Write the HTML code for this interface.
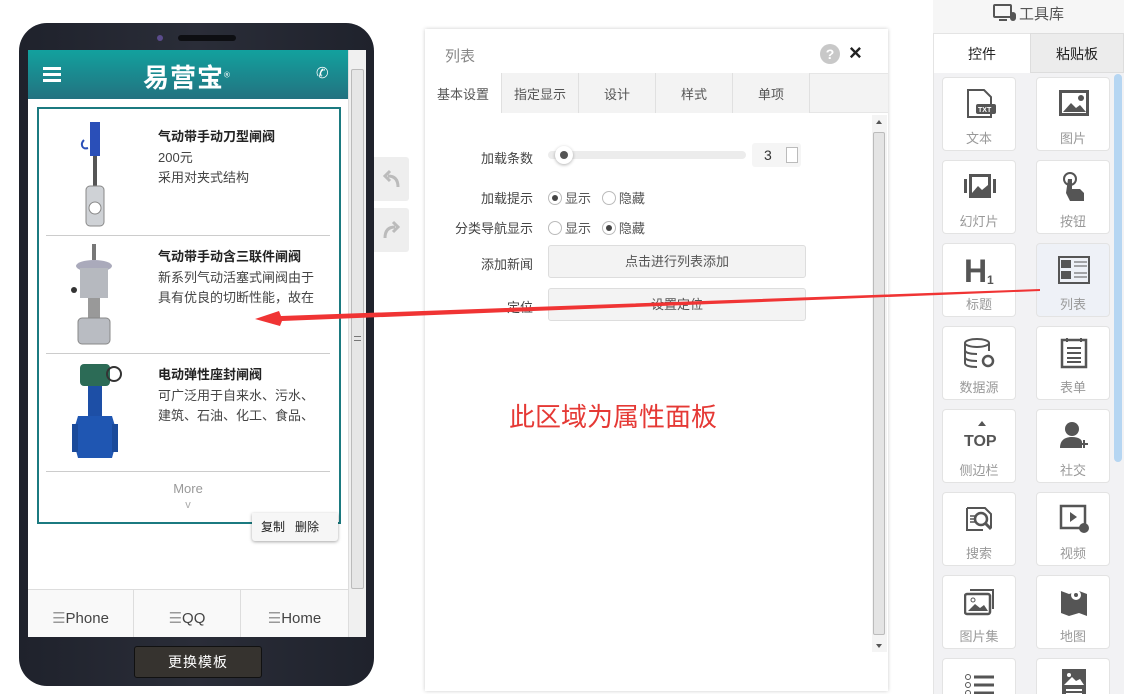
<!DOCTYPE html>
<html><head><meta charset="utf-8"><style>
*{margin:0;padding:0;box-sizing:border-box}
html,body{width:1124px;height:694px;overflow:hidden}
body{background:#fff;font-family:"Liberation Sans","Noto Sans CJK SC",sans-serif;position:relative;color:#333}
.abs{position:absolute}
.phone{left:19px;top:23px;width:355px;height:663px;background:linear-gradient(90deg,#1f222c,#2a2d38 50%,#1f222c);border-radius:28px}
.screen{left:28px;top:50px;width:338px;height:587px;background:#fff;overflow:hidden}
.hdr{left:0;top:0;width:320px;height:49px;background:linear-gradient(180deg,#12a19e,#237280)}
.sb{left:320px;top:0;width:18px;height:587px;background:#f0f0f0;border-left:1px solid #ddd}
.item{position:absolute;left:18px;width:284px;border-bottom:1px solid #ccc}
.item b{position:absolute;left:112px;top:10px;font-size:13px;color:#222}
.item p{position:absolute;left:112px;font-size:13px;color:#444;line-height:20px;width:160px}
.tab{position:absolute;top:73px;height:40px;width:77px;border-right:1px solid #e0e0e0;font-size:13px;line-height:44px;text-align:center;color:#555;background:#f3f3f3}
.lbl{position:absolute;font-size:13px;color:#444;text-align:right;width:90px;left:443px}
.btn{position:absolute;left:548px;width:258px;height:33px;background:#f3f3f3;border:1px solid #ddd;border-radius:3px;font-size:13px;color:#555;text-align:center;line-height:31px}
.rad{display:inline-block;width:14px;height:14px;border:1px solid #bbb;border-radius:50%;vertical-align:-2px;margin-right:3px;position:relative;background:#fff}
.rad.on:after{content:"";position:absolute;left:3px;top:3px;width:6px;height:6px;border-radius:50%;background:#444}
.cell{position:absolute;width:74px;height:74px;border:1px solid #e3e3e3;border-radius:4px;background:#fff;text-align:center;font-size:13px;color:#999}
.cell span{position:absolute;left:0;right:0;top:50px}
.cell svg{position:absolute;left:21px;top:10px}
</style></head><body>
<div class="abs" style="left:933px;top:0;width:191px;height:694px;background:#f2f2f4;border-left:1px solid #e4e4e4"></div>
<div class="abs" style="left:933px;top:0;width:191px;height:33px;font-size:15px;color:#555;text-align:center;line-height:30px;background:#f6f6f6">
<svg width="26" height="20" viewBox="0 0 26 20" style="vertical-align:-4px"><rect x="1" y="2" width="17" height="12" rx="1" fill="none" stroke="#555" stroke-width="2"/><rect x="6" y="16" width="8" height="2" fill="#555"/><rect x="17" y="9" width="6" height="9" rx="3" fill="#555"/></svg>工具库</div>
<div class="abs" style="left:934px;top:33px;width:96px;height:40px;background:#fff;font-size:14px;text-align:center;line-height:40px;color:#222;border-top:1px solid #e4e4e4">控件</div>
<div class="abs" style="left:1030px;top:33px;width:94px;height:40px;background:#ececec;font-size:14px;text-align:center;line-height:40px;color:#222;border:1px solid #ddd">粘贴板</div>
<div class="abs" style="left:1114px;top:74px;width:8px;height:388px;background:#b6d6f2;border-radius:4px"></div>
<div class="cell" style="left:942px;top:77px"><svg width="32" height="32"><path d="M4 2h16l7 7v20H4z" fill="none" stroke="#555" stroke-width="2"/><rect x="12" y="16" width="20" height="10" rx="2" fill="#555"/><text x="14" y="24" font-size="7" fill="#fff" font-weight="bold">TXT</text></svg><span>文本</span></div>
<div class="cell" style="left:1036px;top:77px"><svg width="32" height="32"><rect x="1" y="2" width="30" height="26" fill="#555"/><rect x="4" y="5" width="24" height="20" fill="#fff"/><path d="M5 24l8-9 5 5 4-3 6 7z" fill="#555"/><circle cx="23" cy="10" r="3" fill="#555"/></svg><span>图片</span></div>
<div class="cell" style="left:942px;top:160px"><svg width="32" height="32"><rect x="0" y="8" width="3" height="14" fill="#555"/><rect x="29" y="8" width="3" height="14" fill="#555"/><rect x="5" y="3" width="22" height="24" fill="#555"/><rect x="8" y="6" width="16" height="16" fill="#fff"/><path d="M8 22l6-7 4 4 6-5v8z" fill="#555"/></svg><span>幻灯片</span></div>
<div class="cell" style="left:1036px;top:160px"><svg width="32" height="32"><circle cx="12" cy="8" r="6" fill="none" stroke="#555" stroke-width="2"/><path d="M10 8h4v10h8l4 4v8H12l-4-8z" fill="#555"/></svg><span>按钮</span></div>
<div class="cell" style="left:942px;top:243px"><svg width="32" height="32"><text x="0" y="28" font-size="32" font-weight="bold" fill="#555" font-family="Liberation Sans">H</text><text x="23" y="30" font-size="12" font-weight="bold" fill="#555">1</text></svg><span>标题</span></div>
<div class="cell" style="left:1036px;top:243px;background:#eef1f7"><svg width="32" height="32"><rect x="1" y="3" width="30" height="26" fill="none" stroke="#555" stroke-width="2"/><rect x="3" y="6" width="10" height="8" fill="#555"/><rect x="3" y="17" width="10" height="8" fill="#555"/><path d="M16 8h13M16 12h13M16 19h13M16 23h13" stroke="#555"/></svg><span>列表</span></div>
<div class="cell" style="left:942px;top:326px"><svg width="32" height="32"><ellipse cx="13" cy="6" rx="12" ry="4" fill="none" stroke="#555" stroke-width="2"/><path d="M1 6v20c0 3 6 4 12 4M25 6v8M1 13c0 3 6 4 12 4M1 20c0 3 6 4 12 4" fill="none" stroke="#555" stroke-width="2"/><circle cx="24" cy="24" r="5" fill="none" stroke="#555" stroke-width="2.5"/></svg><span>数据源</span></div>
<div class="cell" style="left:1036px;top:326px"><svg width="32" height="32"><rect x="4" y="3" width="24" height="27" fill="none" stroke="#555" stroke-width="2.5"/><path d="M9 11h14M9 16h14M9 21h14M9 25h14" stroke="#555" stroke-width="2"/><path d="M9 1v4M23 1v4" stroke="#555" stroke-width="2"/></svg><span>表单</span></div>
<div class="cell" style="left:942px;top:409px"><svg width="32" height="32"><path d="M14 6l4-5 4 5z" fill="#555"/><text x="0" y="26" font-size="16" font-weight="bold" fill="#555">TOP</text></svg><span>侧边栏</span></div>
<div class="cell" style="left:1036px;top:409px"><svg width="32" height="32"><circle cx="14" cy="9" r="7" fill="#555"/><path d="M2 28c0-8 5-11 12-11s10 3 10 5v6z" fill="#555"/><path d="M26 20v8M22 24h8" stroke="#555" stroke-width="2"/></svg><span>社交</span></div>
<div class="cell" style="left:942px;top:492px"><svg width="32" height="32"><path d="M3 5h18l6 6v14" fill="none" stroke="#555" stroke-width="2"/><path d="M3 5v22h16" fill="none" stroke="#555" stroke-width="2"/><circle cx="17" cy="16" r="6" fill="none" stroke="#555" stroke-width="2.5"/><path d="M21 20l6 6" stroke="#555" stroke-width="3"/><path d="M6 13h6M6 16h6M6 19h6" stroke="#555" stroke-width="1.5"/></svg><span>搜索</span></div>
<div class="cell" style="left:1036px;top:492px"><svg width="32" height="32"><rect x="3" y="3" width="24" height="22" fill="none" stroke="#555" stroke-width="2.5"/><path d="M12 9l7 5-7 5z" fill="#555"/><circle cx="26" cy="25" r="5" fill="#555"/></svg><span>视频</span></div>
<div class="cell" style="left:942px;top:575px"><svg width="32" height="32"><rect x="1" y="8" width="25" height="20" rx="2" fill="none" stroke="#555" stroke-width="2.5"/><path d="M6 4h23v19" fill="none" stroke="#555" stroke-width="2"/><path d="M4 25l7-7 5 4 4-3 4 6z" fill="#555"/><circle cx="9" cy="14" r="2" fill="none" stroke="#555"/></svg><span>图片集</span></div>
<div class="cell" style="left:1036px;top:575px"><svg width="32" height="32"><path d="M3 5l8 3 10-3 8 3v22l-8-3-10 3-8-3z" fill="#555"/><circle cx="18" cy="9" r="5" fill="#fff"/><circle cx="18" cy="9" r="2" fill="#555"/></svg><span>地图</span></div>
<div class="cell" style="left:942px;top:658px;height:36px;border-radius:4px 4px 0 0;border-bottom:none"><svg width="32" height="32"><circle cx="4" cy="8" r="2.5" fill="none" stroke="#555"/><circle cx="4" cy="16" r="2.5" fill="none" stroke="#555"/><circle cx="4" cy="24" r="2.5" fill="none" stroke="#555"/><path d="M10 8h20M10 16h20M10 24h20" stroke="#555" stroke-width="3"/></svg></div>
<div class="cell" style="left:1036px;top:658px;height:36px;border-radius:4px 4px 0 0;border-bottom:none"><svg width="32" height="32"><rect x="4" y="0" width="24" height="30" fill="#555"/><circle cx="11" cy="6" r="2" fill="#fff"/><path d="M6 16l8-8 4 4 4-2 4 6z" fill="#fff"/><path d="M8 21h16M8 25h16" stroke="#fff" stroke-width="2"/></svg></div>

<div class="abs" style="left:374px;top:157px;width:35px;height:44px;background:#eeeeee;border-radius:0 3px 3px 0"><svg width="35" height="44"><path d="M24 30c0-8-4-11-10-11M16 14l-5 5 5 5" fill="none" stroke="#bbb" stroke-width="3"/></svg></div>
<div class="abs" style="left:374px;top:208px;width:35px;height:44px;background:#eeeeee;border-radius:0 3px 3px 0"><svg width="35" height="44"><path d="M11 30c0-8 4-11 10-11M19 14l5 5-5 5" fill="none" stroke="#bbb" stroke-width="3"/></svg></div>

<div class="abs" style="left:425px;top:29px;width:463px;height:662px;background:#fff;box-shadow:0 0 4px rgba(0,0,0,.2)"></div>
<div class="abs" style="left:445px;top:45px;font-size:15px;color:#888">列表</div>
<div class="abs" style="left:820px;top:44px;width:20px;height:20px;border-radius:50%;background:#c8c8c8;color:#fff;font-size:14px;font-weight:bold;text-align:center;line-height:20px">?</div>
<div class="abs" style="left:849px;top:40px;font-size:22px;font-weight:bold;color:#222">×</div>
<div class="abs" style="left:425px;top:73px;width:463px;height:40px;background:#f3f3f3;border-top:1px solid #e6e6e6;border-bottom:1px solid #e6e6e6"></div>
<div class="tab" style="left:425px;background:#fff">基本设置</div>
<div class="tab" style="left:502px">指定显示</div>
<div class="tab" style="left:579px">设计</div>
<div class="tab" style="left:656px">样式</div>
<div class="tab" style="left:733px">单项</div>
<div class="abs" style="left:872px;top:115px;width:15px;height:537px;background:#f4f4f4"><div style="position:absolute;left:1px;top:17px;width:12px;height:503px;background:#e4e4e4;border:1px solid #bbb;border-radius:2px"></div><div style="position:absolute;left:4px;top:5px;border:3px solid transparent;border-bottom:4px solid #555;border-top:0"></div><div style="position:absolute;left:4px;bottom:4px;border:3px solid transparent;border-top:4px solid #555;border-bottom:0"></div></div>
<div class="lbl" style="top:148px">加载条数</div>
<div class="abs" style="left:548px;top:151px;width:198px;height:8px;background:#ececec;border-radius:4px"></div>
<div class="abs" style="left:555px;top:146px;width:18px;height:18px;border-radius:50%;background:#fff;box-shadow:0 1px 3px rgba(0,0,0,.3)"><div style="position:absolute;left:5px;top:5px;width:8px;height:8px;border-radius:50%;background:#555"></div></div>
<div class="abs" style="left:752px;top:143px;width:49px;height:24px;background:#f5f5f5;border-radius:3px;font-size:14px;line-height:24px;padding-left:12px">3<div style="position:absolute;right:3px;top:4px;width:12px;height:16px;border:1px solid #bbb;background:#fff"></div></div>
<div class="lbl" style="top:188px">加载提示</div>
<div class="abs" style="left:548px;top:188px;font-size:13px;color:#555"><span class="rad on"></span>显示 &nbsp; <span class="rad"></span>隐藏</div>
<div class="lbl" style="top:218px">分类导航显示</div>
<div class="abs" style="left:548px;top:218px;font-size:13px;color:#555"><span class="rad"></span>显示 &nbsp; <span class="rad on"></span>隐藏</div>
<div class="lbl" style="top:254px">添加新闻</div>
<div class="btn" style="top:245px">点击进行列表添加</div>
<div class="lbl" style="top:297px">定位</div>
<div class="btn" style="top:288px">设置定位</div>
<div class="abs" style="left:509px;top:397px;font-size:26px;color:#e53935">此区域为属性面板</div>

<div class="abs phone"></div>
<div class="abs" style="left:157px;top:35px;width:6px;height:6px;border-radius:50%;background:#5a4b8c"></div>
<div class="abs" style="left:178px;top:35px;width:58px;height:6px;border-radius:3px;background:#0d0e12"></div>
<div class="abs screen">
 <div class="abs hdr">
  <div class="abs" style="left:15px;top:17px;width:18px;height:3px;background:#fff;box-shadow:0 6px 0 #fff,0 12px 0 #fff"></div>
  <div class="abs" style="left:115px;top:8px;font-size:26px;font-weight:bold;color:#fff;letter-spacing:1px">易营宝<sup style="font-size:8px;font-weight:normal">®</sup></div>
  <div class="abs" style="left:288px;top:14px;font-size:15px;color:#fff">✆</div>
 </div>
 <div class="abs sb"><div style="position:absolute;left:2px;top:19px;width:13px;height:520px;background:#e6e6e6;border:1px solid #bbb;border-radius:2px"></div><div style="position:absolute;left:5px;top:286px;width:7px;height:5px;border-top:1px solid #777;border-bottom:1px solid #777"></div></div>
 <div class="abs" style="left:9px;top:57px;width:304px;height:417px;border:2px solid #1b7a80"></div>
 <div class="item" style="top:66px;height:120px">
  <svg class="abs" style="left:32px;top:4px" width="36" height="110"><rect x="12" y="2" width="10" height="34" fill="#2a4fb8"/><rect x="15" y="36" width="4" height="30" fill="#555"/><rect x="8" y="66" width="18" height="40" rx="4" fill="#cfd2d6" stroke="#888"/><circle cx="17" cy="88" r="6" fill="#fff" stroke="#888"/><path d="M6 20c-4 4-2 10 4 8" stroke="#2a4fb8" stroke-width="2" fill="none"/></svg>
  <b>气动带手动刀型闸阀</b><p style="top:32px">200元</p><p style="top:52px">采用对夹式结构</p></div>
 <div class="item" style="top:186px;height:118px">
  <svg class="abs" style="left:22px;top:8px" width="56" height="104"><rect x="24" y="0" width="4" height="16" fill="#777"/><ellipse cx="26" cy="22" rx="18" ry="6" fill="#aab"/><rect x="12" y="24" width="28" height="30" fill="#b6b9bf"/><rect x="20" y="54" width="12" height="20" fill="#999"/><rect x="10" y="74" width="32" height="26" rx="4" fill="#b9bcc2" stroke="#888"/><circle cx="6" cy="46" r="3" fill="#333"/></svg>
  <b>气动带手动含三联件闸阀</b><p style="top:32px">新系列气动活塞式闸阀由于具有优良的切断性能，故在</p></div>
 <div class="item" style="top:304px;height:118px">
  <svg class="abs" style="left:22px;top:8px" width="60" height="102"><rect x="12" y="2" width="30" height="22" rx="4" fill="#2c6b56"/><circle cx="46" cy="12" r="7" fill="none" stroke="#333" stroke-width="2"/><rect x="20" y="24" width="14" height="30" fill="#1d4fa6"/><path d="M10 54h34l6 20-6 22H10L4 74z" fill="#1f56b2"/><rect x="4" y="62" width="6" height="28" fill="#1a4a9a"/><rect x="44" y="62" width="6" height="28" fill="#1a4a9a"/></svg>
  <b>电动弹性座封闸阀</b><p style="top:32px">可广泛用于自来水、污水、建筑、石油、化工、食品、</p></div>
 <div class="abs" style="left:0;top:431px;width:320px;text-align:center;font-size:13px;color:#999">More</div>
 <div class="abs" style="left:0;top:449px;width:320px;text-align:center;font-size:11px;color:#aaa">v</div>
 <div class="abs" style="left:224px;top:463px;width:86px;height:28px;background:#f6f6f6;box-shadow:0 1px 3px rgba(0,0,0,.35);font-size:12px;line-height:28px;color:#222;padding-left:9px;border-radius:0 0 3px 3px">复制 &nbsp;&nbsp;删除</div>
 <div class="abs" style="left:0;top:539px;width:320px;height:48px;background:#f9f9f9;border-top:1px solid #ddd;font-size:15px;color:#444">
  <div class="abs" style="left:0;top:0;width:106px;height:48px;border-right:1px solid #ddd;text-align:center;line-height:58px"><span style="color:#999">☰</span>Phone</div>
  <div class="abs" style="left:106px;top:0;width:107px;height:48px;border-right:1px solid #ddd;text-align:center;line-height:58px"><span style="color:#999">☰</span>QQ</div>
  <div class="abs" style="left:213px;top:0;width:107px;height:48px;text-align:center;line-height:58px"><span style="color:#999">☰</span>Home</div>
 </div>
</div>
<div class="abs" style="left:134px;top:646px;width:128px;height:32px;background:#36332f;border:1px solid #111;border-radius:3px;color:#fff;font-size:14px;text-align:center;line-height:31px;letter-spacing:1px">更换模板</div>

<svg class="abs" style="left:0;top:0" width="1124" height="694"><polygon points="1040,289 1040,291 282,321 280,326 255,319 279,311 281,316" fill="#f03434"/></svg>
</body></html>
